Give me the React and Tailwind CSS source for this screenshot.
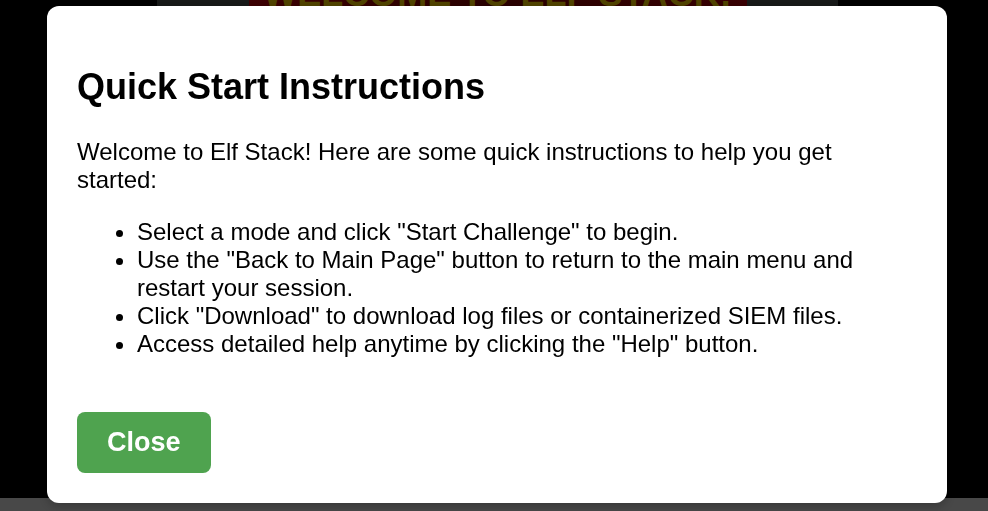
import { useState } from "react";

const steps = [
  'Select a mode and click "Start Challenge" to begin.',
  'Use the "Back to Main Page" button to return to the main menu and restart your session.',
  'Click "Download" to download log files or containerized SIEM files.',
  'Access detailed help anytime by clicking the "Help" button.',
];

function Backdrop() {
  return (
    <div className="flex h-screen flex-col overflow-hidden bg-[#484848]">
      <div className="mb-[13px] flex-1 overflow-hidden bg-black pr-[150px] pl-[157px]">
        <div className="flex h-full justify-center bg-[#171918]">
          <div className="-mt-11 h-20 w-[498px] bg-linear-to-r from-[#3c0003] via-[#280000] to-[#380003] text-center text-4xl leading-[76px] font-bold whitespace-nowrap text-[#504300]">
            WELCOME TO ELF STACK!
          </div>
        </div>
      </div>
    </div>
  );
}

function QuickStart({ onClose }) {
  return (
    <div className="fixed inset-0 pt-[6px] pr-[41px] pl-[47px]">
      <section
        role="dialog"
        aria-labelledby="quick-start-title"
        className="rounded-xl bg-white p-[30px] text-2xl leading-7 text-black shadow-[0_4px_8px_rgba(0,0,0,0.2)]"
      >
        <h2 id="quick-start-title" className="my-[30px] text-4xl leading-[42px] font-bold">
          Quick Start Instructions
        </h2>
        <p className="my-6">Welcome to Elf Stack! Here are some quick instructions to help you get started:</p>
        <ul className="mb-[54px] list-disc pl-[60px]">
          {steps.map((step) => (
            <li key={step}>{step}</li>
          ))}
        </ul>
        <button
          type="button"
          onClick={onClose}
          className="block rounded-lg bg-[#4fa34f] px-[30px] py-[15px] text-[27px] leading-[31px] font-bold text-white"
        >
          Close
        </button>
      </section>
    </div>
  );
}

export default function App() {
  const [open, setOpen] = useState(true);
  return (
    <main className="font-['Liberation_Sans',Arial,sans-serif]">
      <Backdrop />
      {open && <QuickStart onClose={() => setOpen(false)} />}
    </main>
  );
}
